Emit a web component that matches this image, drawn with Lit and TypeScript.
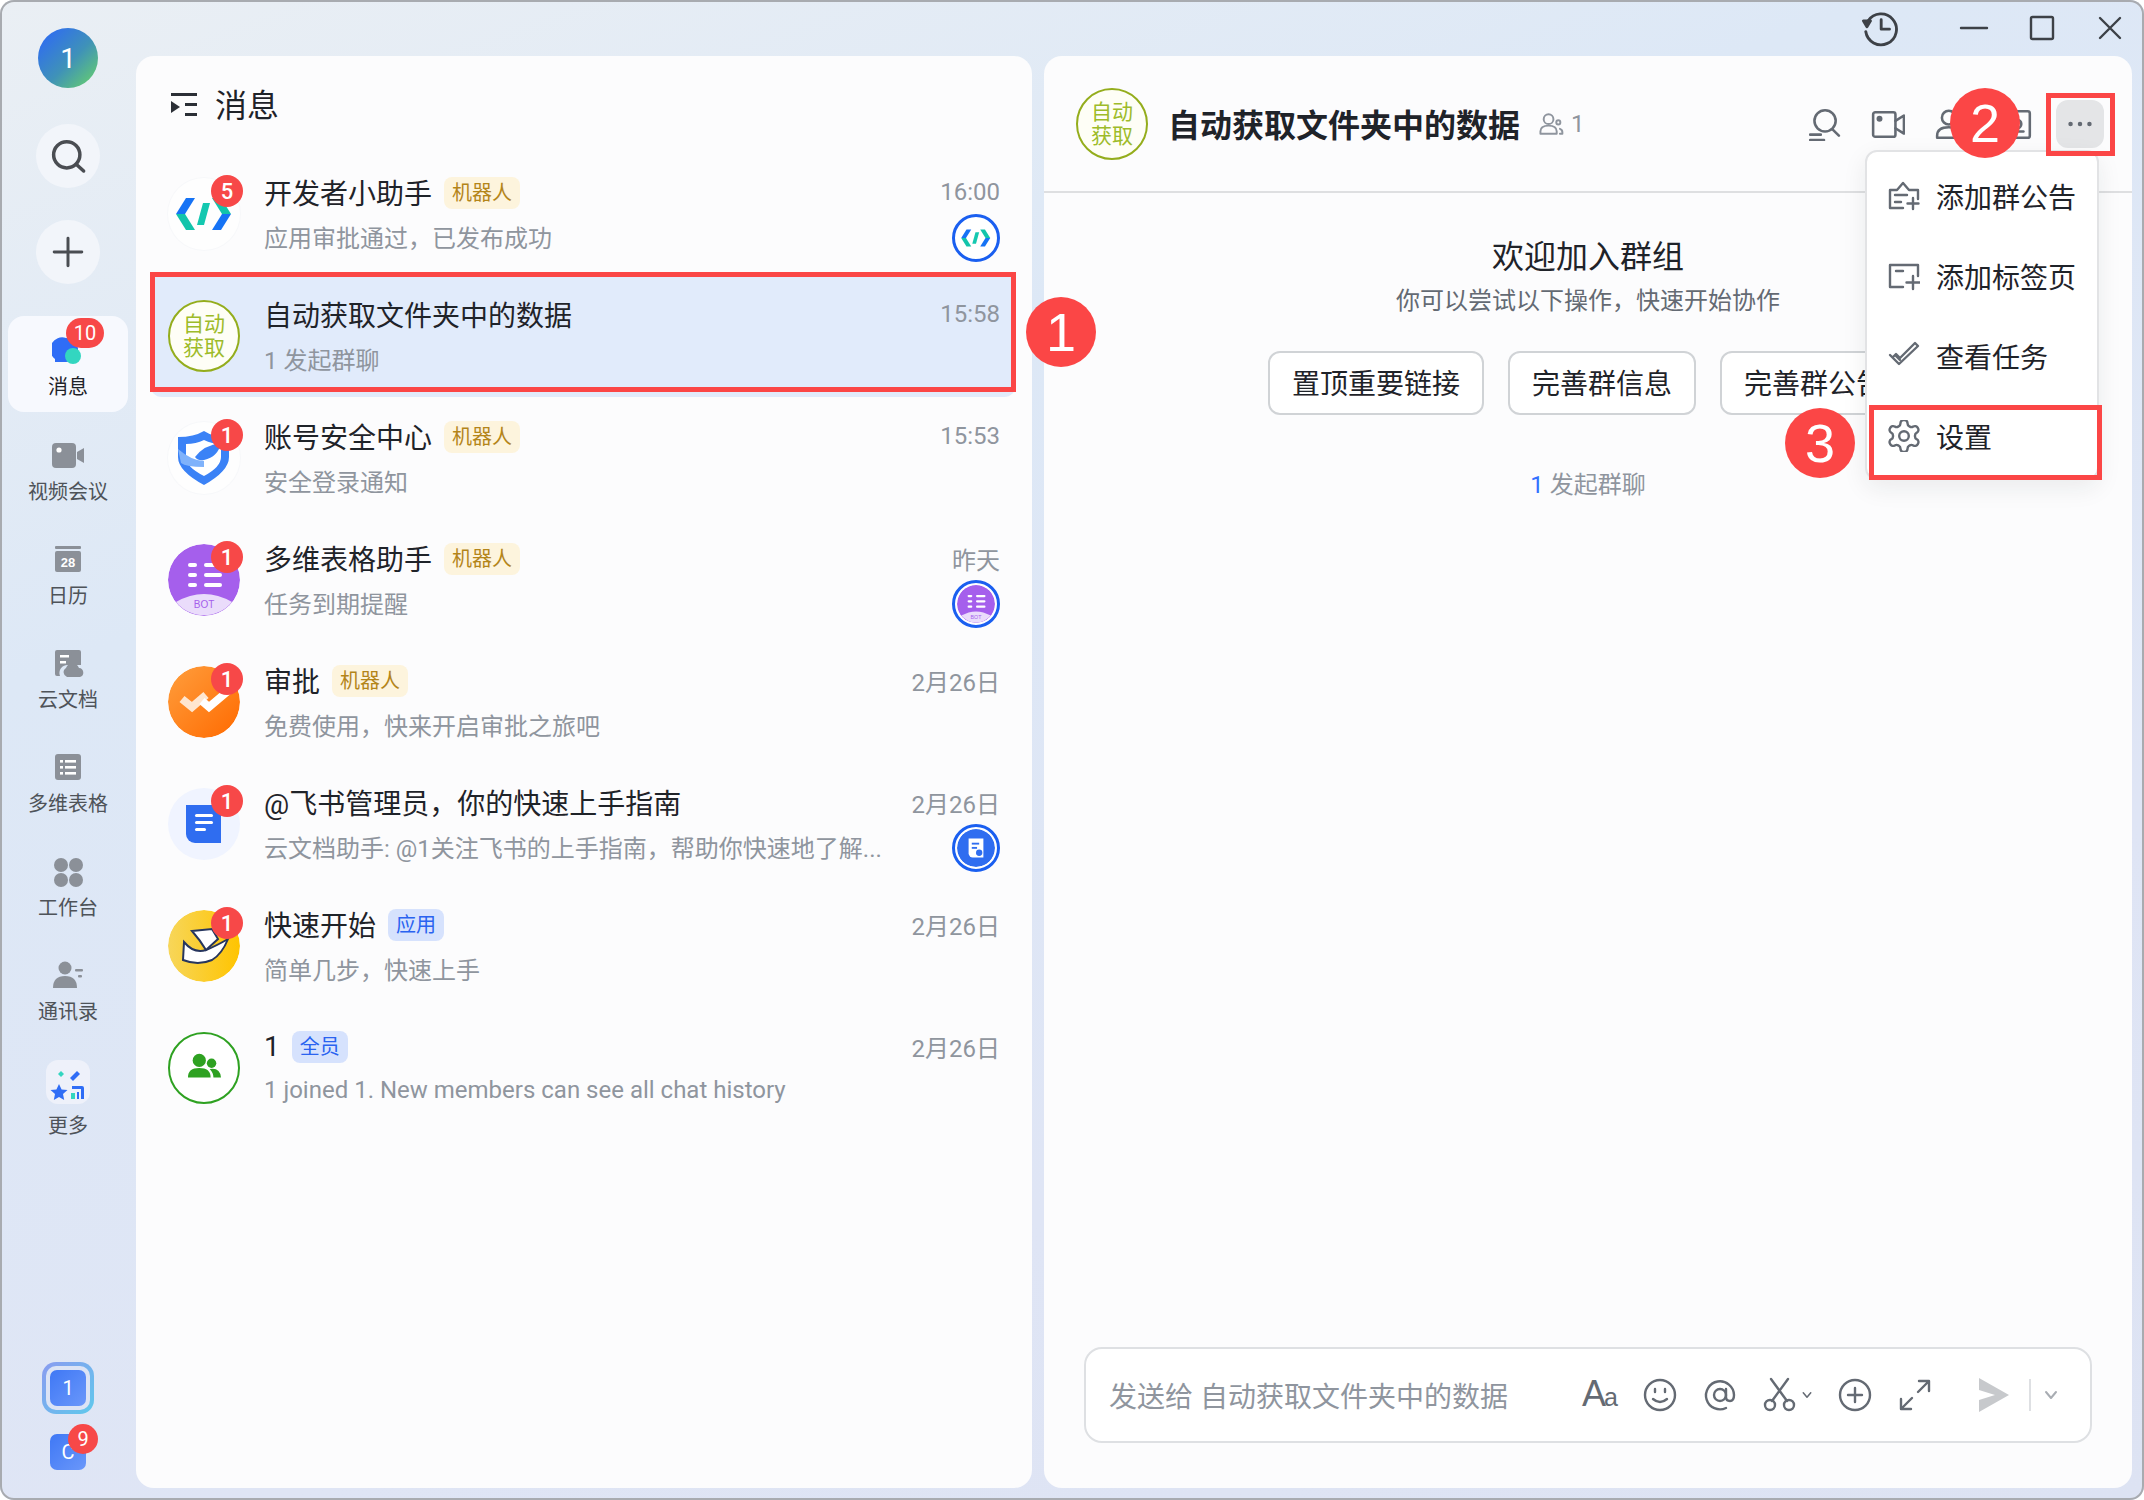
import { LitElement, html, css, svg, nothing } from 'lit';
import { customElement } from 'lit/decorators.js';

const av = (inner: unknown) => html`<svg class="fill" viewBox="0 0 72 72">${inner}</svg>`;

const devArt = svg`
  <polygon points="8,36 18,20 27,20 17,36" fill="#1673f5"/>
  <polygon points="8,36 17,36 27,52 18,52" fill="#12c4ab"/>
  <polygon points="63,36 53,20 44,20 54,36" fill="#12c4ab"/>
  <polygon points="63,36 54,36 44,52 53,52" fill="#1673f5"/>
  <polygon points="35,25 42,25 36,47 29,47" fill="#14c8b0"/>`;

const botArt = svg`
  <circle cx="36" cy="36" r="36" fill="#a55fec"/>
  <path d="M8 58 Q36 42 64 58 A36 36 0 0 1 8 58Z" fill="#eadcfb"/>
  <text x="36" y="64" text-anchor="middle" font-size="10" font-family="Liberation Sans" fill="#a55fec">BOT</text>
  <g fill="#fff">
    <rect x="20" y="19" width="9" height="4" rx="2"/><rect x="36" y="19" width="18" height="4" rx="2"/>
    <rect x="20" y="29" width="9" height="4" rx="2"/><rect x="36" y="29" width="18" height="4" rx="2"/>
    <rect x="20" y="39" width="9" height="4" rx="2"/><rect x="36" y="39" width="18" height="4" rx="2"/>
  </g>`;

const docMini = svg`
  <circle cx="36" cy="36" r="36" fill="#2f6df0"/>
  <path d="M22 18h28v36H30a8 8 0 0 1-8-8z" fill="#fff"/>
  <g fill="#2f6df0"><rect x="28" y="26" width="14" height="3.5"/><rect x="28" y="34" width="10" height="3.5"/><circle cx="42" cy="45" r="6"/></g>`;

const avatars: Record<string, () => unknown> = {
  dev: () => html`<div class="av plain">${av(devArt)}</div>`,
  text: () => html`<div class="av textav"><span>自动</span><span>获取</span></div>`,
  shield: () => html`<div class="av plain">${av(svg`<g transform="translate(0 -5)">
    <path d="M36 14 Q47 21 61 20 V40 Q61 54 36 68 Q10 54 10 40 V20 Q26 20 36 14Z" fill="#3b82f6"/>
    <path d="M36 23 Q44 27 53 27 V40 Q53 50 36 59 Q18 50 18 40 V27 Q28 27 36 23Z" fill="#fff"/>
    <path d="M10 32 Q24 44 36 44 L36 50 Q18 50 13 46Z" fill="#7fb2fb"/>
    <path d="M27 40 Q36 28 53 26 Q50 40 36 43 Q30 44 27 40Z" fill="#3b82f6"/></g>`)}</div>`,
  bot: () => html`<div class="av">${av(botArt)}</div>`,
  approve: () => html`<div class="av">${av(svg`
    <defs><linearGradient id="og" x1="0" y1="0" x2="1" y2="1"><stop offset="0" stop-color="#ff9e3d"/><stop offset="1" stop-color="#ff6a00"/></linearGradient></defs>
    <circle cx="36" cy="36" r="36" fill="url(#og)"/>
    <polyline points="14,33 24,41 38,29" fill="none" stroke="#ffe6cf" stroke-width="8"/>
    <polyline points="34,35 41,41 60,25" fill="none" stroke="#fff" stroke-width="8"/>`)}</div>`,
  doc: () => html`<div class="av softblue">${av(svg`
    <path d="M18 17h35v38H27a9 9 0 0 1-9-9z" fill="#2f6df0"/>
    <g fill="#fff"><rect x="27" y="26" width="18" height="3" rx="1.5"/><rect x="27" y="33" width="18" height="3" rx="1.5"/><rect x="27" y="40" width="11" height="3" rx="1.5"/></g>`)}</div>`,
  start: () => html`<div class="av">${av(svg`
    <defs><linearGradient id="yg" x1="0" y1="0" x2="1" y2="0"><stop offset="0" stop-color="#f7d65a"/><stop offset="1" stop-color="#ffc400"/></linearGradient></defs>
    <circle cx="36" cy="36" r="36" fill="url(#yg)"/>
    <path d="M16 32 Q26 44 38 40 Q48 36 60 29 Q54 44 44 50 Q30 56 15 50Z" fill="#fff" stroke="#27365e" stroke-width="2"/>
    <path d="M24 21 L44 19 L50 29 L38 40 Q32 30 24 21Z" fill="#fff" stroke="#27365e" stroke-width="2"/>`)}</div>`,
  group: () => html`<div class="av ring">${av(svg`
    <g fill="#2ea121">
      <circle cx="31" cy="28" r="7"/><path d="M19 46 Q19 36 31 36 Q43 36 43 46Z"/>
      <circle cx="44" cy="31" r="5"/><path d="M42 37 Q53 35 54 46 H46 Q46 41 42 37Z"/>
    </g>`)}</div>`,
};

const rows = [
  { title: '开发者小助手', tag: '机器人', tagType: 'bot', sub: '应用审批通过，已发布成功', time: '16:00', avatar: 'dev', badge: '5', mini: devArt },
  { title: '自动获取文件夹中的数据', sub: '1 发起群聊', time: '15:58', avatar: 'text', selected: true },
  { title: '账号安全中心', tag: '机器人', tagType: 'bot', sub: '安全登录通知', time: '15:53', avatar: 'shield', badge: '1' },
  { title: '多维表格助手', tag: '机器人', tagType: 'bot', sub: '任务到期提醒', time: '昨天', avatar: 'bot', badge: '1', mini: botArt },
  { title: '审批', tag: '机器人', tagType: 'bot', sub: '免费使用，快来开启审批之旅吧', time: '2月26日', avatar: 'approve', badge: '1' },
  { title: '@飞书管理员，你的快速上手指南', sub: '云文档助手: @1关注飞书的上手指南，帮助你快速地了解...', time: '2月26日', avatar: 'doc', badge: '1', mini: docMini },
  { title: '快速开始', tag: '应用', tagType: 'app', sub: '简单几步，快速上手', time: '2月26日', avatar: 'start', badge: '1' },
  { title: '1', tag: '全员', tagType: 'app', sub: '1 joined 1. New members can see all chat history', time: '2月26日', avatar: 'group' },
];

const railIcons: Record<string, unknown> = {
  video: svg`<svg viewBox="0 0 32 32"><rect x="0" y="3" width="24" height="25" rx="4" fill="#8b9098"/><circle cx="7" cy="10" r="2.6" fill="#fff"/><path d="M25 12l7-4v15l-7-4z" fill="#8b9098"/></svg>`,
  calendar: svg`<svg viewBox="0 0 32 32"><rect x="3" y="2" width="26" height="3" rx="1" fill="#8b9098"/><rect x="3" y="7" width="26" height="21" rx="2" fill="#8b9098"/><text x="16" y="23" text-anchor="middle" font-size="13" font-weight="700" font-family="Liberation Sans" fill="#fff">28</text></svg>`,
  cloud: svg`<svg viewBox="0 0 32 32"><path d="M5 2h22a2 2 0 0 1 2 2v13H16a8 8 0 0 0-8 11H5a2 2 0 0 1-2-2V4a2 2 0 0 1 2-2z" fill="#8b9098"/><rect x="8" y="7" width="9" height="2.5" fill="#fff"/><rect x="8" y="13" width="6" height="2.5" fill="#fff"/><path d="M15 29a5 5 0 0 1-1-9 7 7 0 0 1 13 0 4.600 4.600 0 0 1 1 9z" fill="#8b9098"/></svg>`,
  table: svg`<svg viewBox="0 0 32 32"><rect x="3" y="2" width="26" height="26" rx="3" fill="#8b9098"/><g fill="#fff"><rect x="8" y="8" width="3" height="2.600"/><rect x="13" y="8" width="11" height="2.600"/><rect x="8" y="14" width="3" height="2.600"/><rect x="13" y="14" width="11" height="2.600"/><rect x="8" y="20" width="3" height="2.600"/><rect x="13" y="20" width="11" height="2.600"/></g></svg>`,
  work: svg`<svg viewBox="0 0 32 32" fill="#8b9098"><circle cx="9" cy="9" r="7"/><circle cx="24" cy="9" r="7"/><circle cx="9" cy="24" r="7"/><circle cx="24" cy="24" r="7"/></svg>`,
  contacts: svg`<svg viewBox="0 0 32 32" fill="#8b9098"><circle cx="13" cy="8" r="6.500"/><path d="M1 28q0-12 12-12t12 12z"/><rect x="23" y="9" width="8" height="2.600" rx="1"/><rect x="26" y="15" width="4" height="2.600" rx="1"/></svg>`,
};

const railItems = [
  { label: '视频会议', icon: 'video' },
  { label: '日历', icon: 'calendar' },
  { label: '云文档', icon: 'cloud' },
  { label: '多维表格', icon: 'table' },
  { label: '工作台', icon: 'work' },
  { label: '通讯录', icon: 'contacts' },
];

const stroke = (inner: unknown, box = 32, cls = '') =>
  svg`<svg class=${cls} viewBox="0 0 ${box} ${box}" fill="none" stroke="currentColor" stroke-width="2.400" stroke-linecap="round" stroke-linejoin="round">${inner}</svg>`;

@customElement('app-root')
export class AppRoot extends LitElement {
  static styles = css`
    :host {
      display: block;
      width: 2144px;
      height: 1500px;
      font-family: Roboto, 'Noto Sans CJK SC', sans-serif;
      color: #1f2329;
      background: #fff;
    }
    svg { display: block; }
    .window {
      position: relative;
      display: flex;
      width: 100%;
      height: 100%;
      box-sizing: border-box;
      overflow: hidden;
      border-radius: 14px;
      background: linear-gradient(160deg, #eaeff4 0%, #dde8f6 30%, #dfe5f5 70%, #dde3f3 100%);
      box-shadow: inset 0 0 0 2px #a8abb0;
    }

    /* rail */
    .rail {
      width: 136px;
      flex: none;
      display: flex;
      flex-direction: column;
      align-items: center;
      padding: 28px 0 30px;
      box-sizing: border-box;
    }
    .me {
      width: 60px;
      height: 60px;
      border-radius: 50%;
      background: linear-gradient(135deg, #2f6df0 10%, #3f92b8 55%, #66cf6e 95%);
      color: #fff;
      font-size: 28px;
      display: flex;
      align-items: center;
      justify-content: center;
    }
    .round {
      width: 64px;
      height: 64px;
      border-radius: 50%;
      background: #f2f5fa;
      color: #4a4d52;
      display: flex;
      align-items: center;
      justify-content: center;
    }
    .round svg { width: 34px; height: 34px; stroke-width: 2.8; }
    .search svg { width: 40px; height: 40px; }
    .search { margin-top: 36px; }
    .plus { margin-top: 32px; margin-bottom: 32px; }
    .rail-item {
      position: relative;
      width: 120px;
      height: 96px;
      margin-bottom: 8px;
      padding-top: 20px;
      box-sizing: border-box;
      display: flex;
      flex-direction: column;
      align-items: center;
      border-radius: 16px;
      color: #4e5359;
      font-size: 20px;
      line-height: 28px;
    }
    .rail-item.active { background: #f7f9fe; color: #1f2329; padding-top: 19px; }
    .rail-icon { width: 32px; height: 32px; margin-bottom: 6px; }
    .rail-item.more { padding-top: 16px; }
    .tile {
      width: 44px;
      height: 44px;
      border-radius: 12px;
      background: #eef1fa;
      margin-bottom: 8px;
    }
    .count {
      position: absolute;
      background: #f74848;
      color: #fff;
      border-radius: 16px;
      display: flex;
      align-items: center;
      justify-content: center;
    }
    .rail-count { left: 58px; top: 2px; width: 38px; height: 30px; font-size: 20px; }
    .spacer { flex: 1; }
    .org-ring {
      width: 52px;
      height: 52px;
      box-sizing: border-box;
      padding: 4px;
      border-radius: 14px;
      background: linear-gradient(135deg, #8a9bf0, #5fc9ec);
      margin-bottom: 20px;
    }
    .org-ring-inner {
      height: 100%;
      box-sizing: border-box;
      padding: 4px;
      border-radius: 10px;
      background: #dbe3f5;
    }
    .org {
      position: relative;
      width: 36px;
      height: 36px;
      border-radius: 7px;
      background: linear-gradient(135deg, #3f78f5, #6a97fa);
      color: #fff;
      font-size: 20px;
      display: flex;
      align-items: center;
      justify-content: center;
    }
    .org-count { left: 18px; top: -10px; width: 30px; height: 30px; font-size: 20px; }

    /* main */
    .main { flex: 1; min-width: 0; display: flex; flex-direction: column; padding: 0 12px 12px 0; }
    .titlebar {
      height: 56px;
      flex: none;
      display: flex;
      align-items: center;
      justify-content: flex-end;
      gap: 36px;
      padding-right: 6px;
      color: #3d4147;
    }
    .titlebar svg { width: 32px; height: 32px; }
    .titlebar .history { margin-right: 23px; width: 38px; height: 38px; }
    .panels { flex: 1; min-height: 0; display: flex; gap: 12px; }
    .panel { background: #fcfcfd; border-radius: 18px; }

    /* list */
    .list { width: 896px; flex: none; box-sizing: border-box; padding: 0 16px 0 14px; }
    .list-head {
      height: 97px;
      display: flex;
      align-items: center;
      gap: 17px;
      padding: 0 0 3px 20px;
      font-size: 32px;
      box-sizing: border-box;
    }
    .list-head svg { width: 28px; height: 28px; margin-top: 3px; }
    .row {
      height: 122px;
      box-sizing: border-box;
      display: flex;
      align-items: center;
      gap: 24px;
      padding: 0 16px 0 18px;
      border-radius: 12px;
    }
    .row.selected { background: #e1ebfb; }
    .av-wrap { position: relative; width: 72px; height: 72px; flex: none; }
    .av { width: 72px; height: 72px; border-radius: 50%; overflow: hidden; box-sizing: border-box; flex: none; }
    .fill { width: 100%; height: 100%; }
    .plain { background: #fefefe; box-shadow: 0 0 0 1px #f7f8fa; }
    .softblue { background: #f0f4ff; }
    .ring { border: 2.5px solid #2ea121; background: #fff; }
    .textav {
      border: 2.5px solid #94ad1c;
      background: #fefef6;
      color: #9dbb2a;
      font-size: 21px;
      line-height: 24px;
      display: flex;
      flex-direction: column;
      align-items: center;
      justify-content: center;
    }
    .av-count { left: 43px; top: -3px; width: 32px; height: 32px; font-size: 22px; font-weight: 500; }
    .text { flex: 1; min-width: 0; }
    .line { display: flex; align-items: center; }
    .title-line { height: 40px; font-size: 28px; white-space: nowrap; }
    .title-line > span:first-child, .time { position: relative; top: -1px; }
    .sub-line { height: 34px; margin-top: 8px; font-size: 24px; color: #8f959e; white-space: nowrap; }
    .sub-line > span:first-child { position: relative; top: -2px; }
    .tag {
      margin-left: 12px;
      padding: 0 8px;
      height: 32px;
      line-height: 32px;
      border-radius: 8px;
      font-size: 20px;
    }
    .tag.bot { background: #fdf4dd; color: #b4851a; }
    .tag.app { background: #d6e2fd; color: #2a63f0; }
    .grow { flex: 1; }
    .time { font-size: 24px; color: #8f959e; }
    .mini {
      width: 48px;
      height: 48px;
      flex: none;
      box-sizing: border-box;
      padding: 2px;
      border: 3px solid #1a5ff0;
      border-radius: 50%;
      background: #fff;
      margin: -7px 0;
    }
    .mini svg { border-radius: 50%; }

    /* chat */
    .chat { position: relative; flex: 1; min-width: 0; display: flex; flex-direction: column; }
    .chat-head {
      height: 137px;
      flex: none;
      box-sizing: border-box;
      display: flex;
      align-items: center;
      padding: 0 28px 0 32px;
      border-bottom: 2px solid #dedfe1;
    }
    .chat-title { margin-left: 20px; margin-bottom: 2px; font-size: 32px; font-weight: 700; white-space: nowrap; }
    .members { margin-left: 18px; display: flex; align-items: center; gap: 7px; font-size: 24px; color: #8f959e; }
    .members svg { width: 26px; height: 26px; }
    .head-btns { margin-left: auto; display: flex; gap: 16px; color: #646a73; }
    .head-btn {
      width: 48px;
      height: 48px;
      border-radius: 12px;
      display: flex;
      align-items: center;
      justify-content: center;
    }
    .head-btn svg { width: 34px; height: 34px; }
    .head-btn.on { background: #e4e5e7; }
    .welcome { flex: 1; display: flex; flex-direction: column; align-items: center; padding-top: 42px; }
    .welcome h2 { margin: 0; font-size: 32px; line-height: 44px; font-weight: 400; }
    .welcome p { margin: 5px 0 0; font-size: 24px; line-height: 34px; color: #646a73; }
    .actions { display: flex; gap: 24px; margin-top: 33px; }
    .action {
      height: 64px;
      box-sizing: border-box;
      padding: 0 22px;
      border: 2px solid #d0d3d6;
      border-radius: 12px;
      background: #fff;
      font-size: 28px;
      line-height: 64px;
    }
    .note { margin-top: 53px; font-size: 24px; line-height: 34px; color: #8f959e; }
    .note b { font-weight: 400; color: #3370ff; }
    .input {
      flex: none;
      height: 96px;
      margin: 0 40px 45px;
      box-sizing: border-box;
      border: 2px solid #dee0e3;
      border-radius: 18px;
      background: #fff;
      display: flex;
      align-items: center;
      gap: 24px;
      padding: 0 31px 0 23px;
      color: #646a73;
    }
    .placeholder { flex: 1; font-size: 28px; color: #8f959e; white-space: nowrap; }
    .input svg { width: 36px; height: 36px; }
    .aa { width: 36px; font-family: 'Liberation Sans', sans-serif; font-size: 36px; line-height: 36px; white-space: nowrap; letter-spacing: -2px; }
    .aa small { font-size: 25px; }
    .cut { display: flex; align-items: center; gap: 3px; }
    .cut .chev { width: 12px; height: 12px; }
    .send-group { display: flex; align-items: center; gap: 18px; margin-left: 18px; color: #c7c9cc; }
    .send-group i { width: 2px; height: 32px; background: #dee0e3; margin-right: -6px; }
    .send-group .chev { width: 16px; height: 16px; color: #a9adb3; }

    /* menu */
    .menu {
      position: absolute;
      left: 821px;
      top: 94px;
      width: 234px;
      height: 330px;
      box-sizing: border-box;
      padding-top: 4px;
      border: 2px solid #e2e3e5;
      border-radius: 12px;
      background: #fff;
      box-shadow: 0 8px 24px rgba(31, 35, 41, 0.08);
    }
    .menu-item {
      height: 80px;
      display: flex;
      align-items: center;
      gap: 16px;
      padding-left: 21px;
      font-size: 28px;
      white-space: nowrap;
    }
    .menu-item svg { width: 32px; height: 32px; flex: none; color: #646a73; }

    /* annotations */
    .mark { position: absolute; box-sizing: border-box; border: 5px solid #fb4646; pointer-events: none; }
    .mark-1 { left: 150px; top: 272px; width: 866px; height: 120px; }
    .mark-2 { left: 2046px; top: 93px; width: 69px; height: 63px; }
    .mark-3 { left: 1869px; top: 405px; width: 233px; height: 75px; }
    .num {
      position: absolute;
      width: 70px;
      height: 70px;
      border-radius: 50%;
      background: #fb4646;
      color: #fff;
      font-family: 'Liberation Sans', sans-serif;
      font-size: 54px;
      display: flex;
      align-items: center;
      justify-content: center;
    }
    .num-1 { left: 1026px; top: 297px; }
    .num-2 { left: 1950px; top: 88px; }
    .num-3 { left: 1785px; top: 408px; }
  `;

  private renderRail() {
    return html`
      <nav class="rail">
        <div class="me">1</div>
        <div class="round search">${stroke(svg`<circle cx="15" cy="15" r="10.500"/><path d="M23 23l5.500 5"/>`)}</div>
        <div class="round plus">${stroke(svg`<path d="M16 3v26M3 16h26"/>`)}</div>
        <div class="rail-item active">
          <div class="rail-icon">
            <svg viewBox="0 0 32 32">
              <path d="M14 3a12 12 0 1 1 0 24H3v-3a12 12 0 0 1 11-21z" fill="#2f6df6" />
              <circle cx="21" cy="21" r="8" fill="#33d6c0" />
            </svg>
          </div>
          消息
          <span class="count rail-count">10</span>
        </div>
        ${railItems.map(
          (r) => html`<div class="rail-item"><div class="rail-icon">${railIcons[r.icon]}</div>${r.label}</div>`,
        )}
        <div class="rail-item more">
          <div class="tile">
            <svg viewBox="0 0 44 44">
              <path d="M24 18l7-7 3 3-7 7z" fill="#2f6df6" />
              <path d="M15 11l3 3-3 3-3-3z" fill="#33d6c0" />
              <path d="M13 25l2.600 5.500 5.900.6-4.500 4 1.200 6-5.200-3-5.200 3 1.200-6-4.500-4 5.900-.6z" fill="#2f6df6" transform="translate(0 -1)" />
              <path d="M26 26h10a2 2 0 0 1 2 2v11h-3V29h-9z M31 32h2v7h-2z" fill="#2f6df6" />
              <rect x="25" y="33" width="4" height="6" fill="#33d6c0" />
            </svg>
          </div>
          更多
        </div>
        <div class="spacer"></div>
        <div class="org-ring"><div class="org-ring-inner"><div class="org">1</div></div></div>
        <div class="org">C<span class="count org-count">9</span></div>
      </nav>
    `;
  }

  private renderRow(r: (typeof rows)[number]) {
    return html`
      <div class="row ${r.selected ? 'selected' : ''}">
        <div class="av-wrap">
          ${avatars[r.avatar]()}
          ${r.badge ? html`<span class="count av-count">${r.badge}</span>` : nothing}
        </div>
        <div class="text">
          <div class="line title-line">
            <span>${r.title}</span>
            ${r.tag ? html`<span class="tag ${r.tagType}">${r.tag}</span>` : nothing}
            <span class="grow"></span>
            <span class="time">${r.time}</span>
          </div>
          <div class="line sub-line">
            <span>${r.sub}</span>
            <span class="grow"></span>
            ${r.mini ? html`<div class="mini">${av(r.mini)}</div>` : nothing}
          </div>
        </div>
      </div>
    `;
  }

  private renderChat() {
    const chev = svg`<svg class="chev" viewBox="0 0 16 16" fill="none" stroke="currentColor" stroke-width="2" stroke-linecap="round" stroke-linejoin="round"><path d="M3 5l5 6 5-6"/></svg>`;
    return html`
      <section class="panel chat">
        <header class="chat-head">
          <div class="av textav"><span>自动</span><span>获取</span></div>
          <div class="chat-title">自动获取文件夹中的数据</div>
          <div class="members">
            ${stroke(svg`<circle cx="13" cy="10" r="6"/><path d="M3 28v-3q0-7 10-7t10 7v3z"/><circle cx="25" cy="14" r="2.500"/><path d="M27 22q3 1 3 4v2h-3"/>`)}
            1
          </div>
          <div class="head-btns">
            <div class="head-btn">${stroke(svg`<circle cx="17" cy="13" r="10"/><path d="M24 21l6 6M3 26h10M3 31h13"/>`)}</div>
            <div class="head-btn">${stroke(svg`<rect x="2" y="5" width="21" height="23" rx="2"/><circle cx="8" cy="11" r="1.600" fill="currentColor"/><path d="M23 13l8-5v17l-8-5"/>`)}</div>
            <div class="head-btn">${stroke(svg`<circle cx="13" cy="10" r="6.500"/><path d="M2 29v-2q0-8 11-8t11 8v2z"/><path d="M26 6v8M22 10h8"/>`)}</div>
            <div class="head-btn">${stroke(svg`<rect x="4" y="4" width="25" height="25" rx="2"/><circle cx="17" cy="16" r="4"/><path d="M9 23h14"/>`)}</div>
            <div class="head-btn on">
              <svg viewBox="0 0 36 36" fill="#646a73"><circle cx="8" cy="18" r="2.400" /><circle cx="18" cy="18" r="2.400" /><circle cx="28" cy="18" r="2.400" /></svg>
            </div>
          </div>
        </header>
        <div class="welcome">
          <h2>欢迎加入群组</h2>
          <p>你可以尝试以下操作，快速开始协作</p>
          <div class="actions">
            <div class="action">置顶重要链接</div>
            <div class="action">完善群信息</div>
            <div class="action">完善群公告</div>
          </div>
          <div class="note"><b>1</b> 发起群聊</div>
        </div>
        <div class="input">
          <div class="placeholder">发送给 自动获取文件夹中的数据</div>
          <div class="aa">A<small>a</small></div>
          ${stroke(svg`<circle cx="18" cy="18" r="15"/><path d="M13 12v3M23 12v3M11 22q7 6 14 0"/>`, 36)}
          ${stroke(svg`<circle cx="18" cy="18" r="6"/><path d="M24 12v8q0 4 4 4t4-6A14 14 0 1 0 24 31"/>`, 36)}
          <div class="cut">
            ${stroke(svg`<circle cx="8" cy="28" r="5"/><circle cx="27" cy="28" r="5"/><path d="M10 24L26 2M25 24L9 2"/>`, 36)}
            ${chev}
          </div>
          ${stroke(svg`<circle cx="18" cy="18" r="15"/><path d="M18 11v14M11 18h14"/>`, 36)}
          ${stroke(svg`<path d="M22 4h10v10M32 4L21 15M4 22v10h10M4 32l11-11"/>`, 36)}
          <div class="send-group">
            <svg viewBox="0 0 36 36"><path d="M4 1l30 17L4 35V23l16-5L4 13z" fill="currentColor" /></svg>
            <i></i>
            ${chev}
          </div>
        </div>
        <div class="menu">
          <div class="menu-item">
            ${stroke(svg`<path d="M15 28H2V10h7l6-7 6 7h9v9"/><path d="M7 15h12M7 22h6M25 18v11M19.500 23.500h11"/>`)}
            添加群公告
          </div>
          <div class="menu-item">
            ${stroke(svg`<path d="M15 27H2V5h28v11"/><path d="M8 11h7M25 16v13M18.500 22.500h13"/>`)}
            添加标签页
          </div>
          <div class="menu-item">
            ${stroke(svg`<path d="M2 15l9 9 19-18-3-3-15 15-4-4-3 3"/><path d="M8 16l4 4"/>`)}
            查看任务
          </div>
          <div class="menu-item">
            <svg viewBox="2 2 20 20" fill="none" stroke="currentColor" stroke-width="1.500" stroke-linecap="round" stroke-linejoin="round">
              <path d="M12.220 2h-.44a2 2 0 0 0-2 2v.18a2 2 0 0 1-1 1.730l-.43.25a2 2 0 0 1-2 0l-.15-.08a2 2 0 0 0-2.730.73l-.22.38a2 2 0 0 0 .73 2.730l.15.1a2 2 0 0 1 1 1.720v.51a2 2 0 0 1-1 1.740l-.15.09a2 2 0 0 0-.73 2.730l.22.38a2 2 0 0 0 2.730.73l.15-.08a2 2 0 0 1 2 0l.43.25a2 2 0 0 1 1 1.730V20a2 2 0 0 0 2 2h.44a2 2 0 0 0 2-2v-.18a2 2 0 0 1 1-1.730l.43-.25a2 2 0 0 1 2 0l.15.08a2 2 0 0 0 2.730-.73l.22-.39a2 2 0 0 0-.73-2.730l-.15-.08a2 2 0 0 1-1-1.740v-.5a2 2 0 0 1 1-1.740l.15-.09a2 2 0 0 0 .73-2.730l-.22-.38a2 2 0 0 0-2.730-.73l-.15.08a2 2 0 0 1-2 0l-.43-.25a2 2 0 0 1-1-1.730V4a2 2 0 0 0-2-2z" />
              <circle cx="12" cy="12" r="3" />
            </svg>
            设置
          </div>
        </div>
      </section>
    `;
  }

  render() {
    return html`
      <div class="window">
        ${this.renderRail()}
        <div class="main">
          <div class="titlebar">
            ${stroke(svg`<path d="M6 10A13 13 0 1 1 4 19"/><path d="M2 10h6l-3 5z" fill="currentColor"/><path d="M17 9v8h7"/>`, 32, 'history')}
            ${stroke(svg`<path d="M3 16h26"/>`)}
            ${stroke(svg`<rect x="5" y="5" width="22" height="22" rx="1.500"/>`)}
            ${stroke(svg`<path d="M6 6l20 20M26 6L6 26"/>`)}
          </div>
          <div class="panels">
            <section class="panel list">
              <div class="list-head">
                <svg viewBox="0 0 28 28" fill="#2b2f36">
                  <rect x="1" y="2" width="26" height="3" />
                  <path d="M1 10l9 6-9 6z" />
                  <rect x="15" y="12" width="12" height="3" />
                  <rect x="15" y="22" width="12" height="3" />
                </svg>
                消息
              </div>
              ${rows.map((r) => this.renderRow(r))}
            </section>
            ${this.renderChat()}
          </div>
        </div>
        <div class="mark mark-1"></div>
        <div class="mark mark-2"></div>
        <div class="mark mark-3"></div>
        <div class="num num-1">1</div>
        <div class="num num-2">2</div>
        <div class="num num-3">3</div>
      </div>
    `;
  }
}
